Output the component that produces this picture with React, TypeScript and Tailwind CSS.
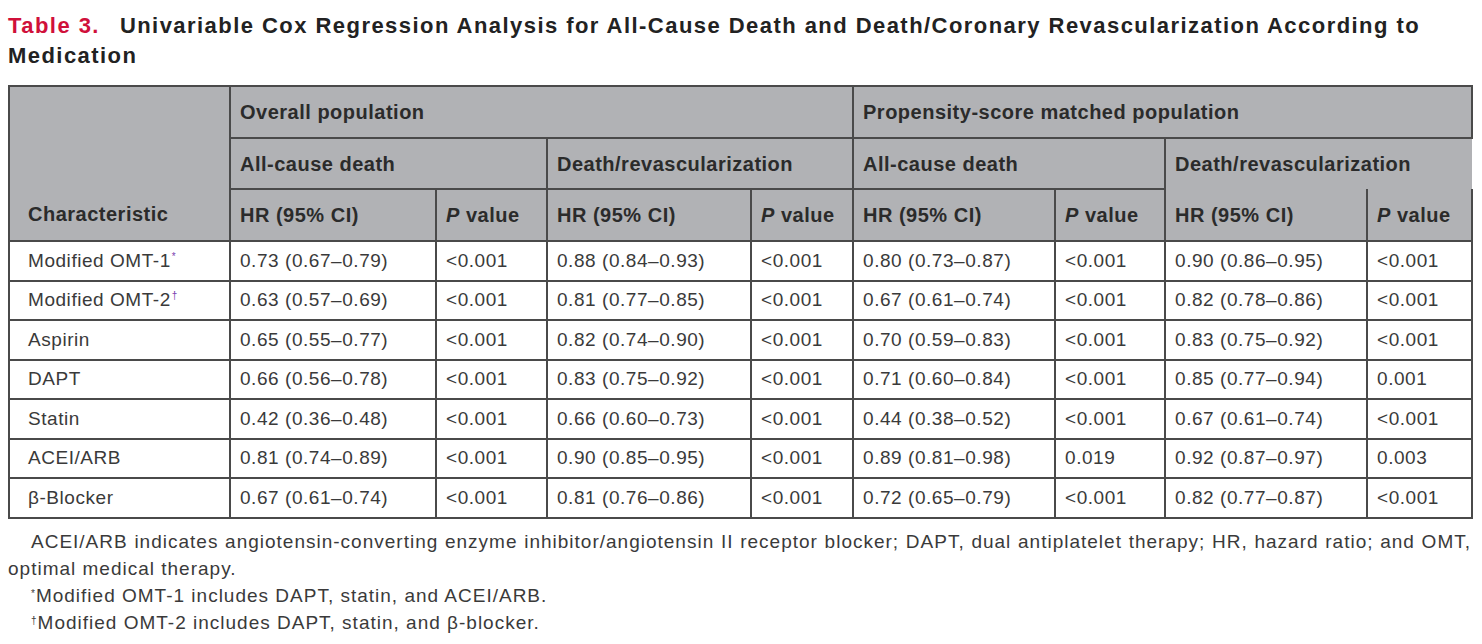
import React from 'react';

const rows = [
  ['Modified OMT-1', '*', '0.73 (0.67–0.79)', '<0.001', '0.88 (0.84–0.93)', '<0.001', '0.80 (0.73–0.87)', '<0.001', '0.90 (0.86–0.95)', '<0.001'],
  ['Modified OMT-2', '†', '0.63 (0.57–0.69)', '<0.001', '0.81 (0.77–0.85)', '<0.001', '0.67 (0.61–0.74)', '<0.001', '0.82 (0.78–0.86)', '<0.001'],
  ['Aspirin', '', '0.65 (0.55–0.77)', '<0.001', '0.82 (0.74–0.90)', '<0.001', '0.70 (0.59–0.83)', '<0.001', '0.83 (0.75–0.92)', '<0.001'],
  ['DAPT', '', '0.66 (0.56–0.78)', '<0.001', '0.83 (0.75–0.92)', '<0.001', '0.71 (0.60–0.84)', '<0.001', '0.85 (0.77–0.94)', '0.001'],
  ['Statin', '', '0.42 (0.36–0.48)', '<0.001', '0.66 (0.60–0.73)', '<0.001', '0.44 (0.38–0.52)', '<0.001', '0.67 (0.61–0.74)', '<0.001'],
  ['ACEI/ARB', '', '0.81 (0.74–0.89)', '<0.001', '0.90 (0.85–0.95)', '<0.001', '0.89 (0.81–0.98)', '0.019', '0.92 (0.87–0.97)', '0.003'],
  ['β-Blocker', '', '0.67 (0.61–0.74)', '<0.001', '0.81 (0.76–0.86)', '<0.001', '0.72 (0.65–0.79)', '<0.001', '0.82 (0.77–0.87)', '<0.001'],
];

const th = 'border-2 border-[#4a4a4a] bg-[#b1b2b5] text-left font-bold text-[20px] tracking-[0.5px] text-[#2b2b2b] px-[9px]';
const td = 'border-2 border-[#4a4a4a] px-[9px] text-[19px] tracking-[0.55px] text-[#3a3a3a] font-normal';

const PValue = () => (
  <>
    <i>P</i> value
  </>
);

export default function App() {
  return (
    <div className="bg-white w-[1482px] h-[644px] overflow-hidden font-['Liberation_Sans',Arial,sans-serif]">
      <div className="pl-[8px] pt-[11px] text-[22px] tracking-[1.45px] leading-[30px] font-bold text-[#222]">
        <div className="flex gap-[20px] whitespace-nowrap">
          <span className="text-[#d0103a]">Table 3.</span>
          <span>Univariable Cox Regression Analysis for All-Cause Death and Death/Coronary Revascularization According to</span>
        </div>
        <div>Medication</div>
      </div>

      <table className="ml-[8px] mt-[14px] w-[1463px] table-fixed border-collapse">
        <colgroup>
          <col className="w-[221px]" />
          <col className="w-[206px]" />
          <col className="w-[111px]" />
          <col className="w-[204px]" />
          <col className="w-[102px]" />
          <col className="w-[202px]" />
          <col className="w-[110px]" />
          <col className="w-[202px]" />
          <col className="w-[105px]" />
        </colgroup>
        <thead>
          <tr className="h-[52px]">
            <th rowSpan={3} className={`${th} align-bottom pl-[18px] pb-[11px]`}>
              Characteristic
            </th>
            <th colSpan={4} className={th}>Overall population</th>
            <th colSpan={4} className={th}>Propensity-score matched population</th>
          </tr>
          <tr className="h-[51px]">
            <th colSpan={2} className={th}>All-cause death</th>
            <th colSpan={2} className={th}>Death/revascularization</th>
            <th colSpan={2} className={th}>All-cause death</th>
            <th colSpan={2} className={`${th} border-b-0 border-r-0`}>Death/revascularization</th>
          </tr>
          <tr className="h-[52px]">
            <th className={th}>HR (95% CI)</th>
            <th className={th}><PValue /></th>
            <th className={th}>HR (95% CI)</th>
            <th className={th}><PValue /></th>
            <th className={th}>HR (95% CI)</th>
            <th className={th}><PValue /></th>
            <th className={`${th} border-t-0`}>HR (95% CI)</th>
            <th className={`${th} border-t-0`}><PValue /></th>
          </tr>
        </thead>
        <tbody>
          {rows.map((r) => (
            <tr key={r[0]} className="h-[39.5px]">
              <td className={`${td} pl-[18px]`}>
                {r[0]}
                {r[1] && <sup className="text-[10px] text-[#7a3fb0] ml-[1px] -top-[0.7em]">{r[1]}</sup>}
              </td>
              {r.slice(2).map((c, i) => (
                <td key={i} className={td}>{c}</td>
              ))}
            </tr>
          ))}
        </tbody>
      </table>

      <div className="ml-[8px] w-[1463px] mt-[9px] text-[19px] tracking-[1px] leading-[27px] text-[#3a3a3a]">
        <p className="indent-[23px] text-justify">
          ACEI/ARB indicates angiotensin-converting enzyme inhibitor/angiotensin II receptor blocker; DAPT, dual antiplatelet therapy; HR, hazard ratio; and OMT, optimal medical therapy.
        </p>
        <p className="indent-[23px]">
          <sup className="text-[10px]">*</sup>Modified OMT-1 includes DAPT, statin, and ACEI/ARB.
        </p>
        <p className="indent-[23px]">
          <sup className="text-[10px]">†</sup>Modified OMT-2 includes DAPT, statin, and β-blocker.
        </p>
      </div>
    </div>
  );
}
